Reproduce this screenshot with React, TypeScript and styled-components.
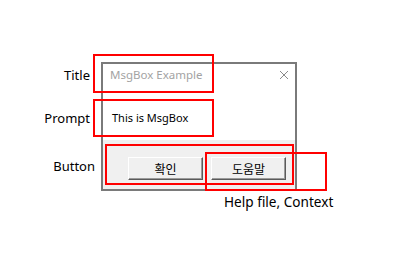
import React from 'react';
import styled, { createGlobalStyle } from 'styled-components';

const GlobalStyle = createGlobalStyle`
  html, body {
    margin: 0;
    padding: 0;
    background: #ffffff;
  }
  body {
    font-family: 'Noto Sans', 'Noto Sans CJK KR', sans-serif;
  }
`;

// red annotation frames laid over the message box
const highlights = [
  { left: 93, top: -8, width: 121, height: 39 },
  { left: 93, top: 37, width: 121, height: 38 },
  { left: 105, top: 82, width: 189, height: 41 },
];

export default function App() {
  return (
    <>
      <GlobalStyle />
      <Stage>
        <Diagram>
          <Row>
            <Label padRight={11} padTop={5}>Title</Label>
            <TitleBar>
              <TitleText>MsgBox Example</TitleText>
              <svg width="10" height="10" viewBox="0 0 10 10">
                <path d="M1 1 L9 9 M9 1 L1 9" stroke="#8a8a8a" strokeWidth="1" fill="none" />
              </svg>
            </TitleBar>
          </Row>
          <Row>
            <Label padRight={11} padTop={24}>Prompt</Label>
            <Body>
              <PromptText>This is MsgBox</PromptText>
            </Body>
          </Row>
          <Row>
            <Label padRight={6} padTop={18}>Button</Label>
            <Footer>
              <Button>확인</Button>
              <Button>도움말</Button>
            </Footer>
          </Row>

          {highlights.map((h, i) => (
            <Highlight key={i} style={{ left: h.left, top: h.top, width: h.width, height: h.height }} />
          ))}
          <Highlight style={{ left: 205, top: 90, width: 122, height: 39 }}>
            <Caption>Help file, Context</Caption>
          </Highlight>
        </Diagram>
      </Stage>
    </>
  );
}

const Stage = styled.div`
  width: 397px;
  height: 259px;
  box-sizing: border-box;
  padding-top: 62px;
`;

const Diagram = styled.div`
  position: relative;
  display: flex;
  flex-direction: column;
`;

const Row = styled.div`
  display: flex;
  align-items: stretch;
`;

const Label = styled.div<{ padRight: number; padTop: number }>`
  width: 101px;
  box-sizing: border-box;
  padding-right: ${({ padRight }) => padRight}px;
  padding-top: ${({ padTop }) => padTop}px;
  text-align: right;
  font-size: 13px;
  line-height: 16px;
  color: #000000;
  white-space: nowrap;
`;

const Section = styled.div`
  width: 196px;
  box-sizing: border-box;
  border-left: 2px solid #7a7a7a;
  border-right: 2px solid #7a7a7a;
`;

const TitleBar = styled(Section)`
  height: 24px;
  border-top: 2px solid #7a7a7a;
  background: #ffffff;
  display: flex;
  align-items: center;
  justify-content: space-between;
  padding: 0 6px 0 7px;

  svg {
    display: block;
  }
`;

const TitleText = styled.span`
  font-size: 11.5px;
  line-height: 16px;
  color: #a3a3a3;
`;

const Body = styled(Section)`
  height: 54px;
  background: #ffffff;
  padding: 24px 0 0 9px;
`;

const PromptText = styled.div`
  font-size: 11px;
  line-height: 16px;
  color: #000000;
`;

const Footer = styled(Section)`
  height: 51px;
  border-bottom: 2px solid #7a7a7a;
  background: #f0f0f0;
  display: flex;
  justify-content: flex-end;
  align-items: flex-start;
  gap: 8px;
  padding: 17px 9px 0 0;
`;

const Button = styled.div`
  width: 75px;
  height: 23px;
  box-sizing: border-box;
  display: flex;
  align-items: center;
  justify-content: center;
  background: #f0f0f0;
  border: 1px solid;
  border-color: #ffffff #5a5a5a #5a5a5a #ffffff;
  box-shadow: inset -1px -1px #9a9a9a;
  font-family: 'Noto Sans CJK KR', sans-serif;
  font-size: 12px;
  color: #000000;
`;

const Highlight = styled.div`
  position: absolute;
  box-sizing: border-box;
  border: 2px solid #ff0000;
`;

const Caption = styled.span`
  position: absolute;
  top: calc(100% + 5px);
  left: 17px;
  font-size: 13.6px;
  line-height: 16px;
  color: #000000;
  white-space: nowrap;
`;
